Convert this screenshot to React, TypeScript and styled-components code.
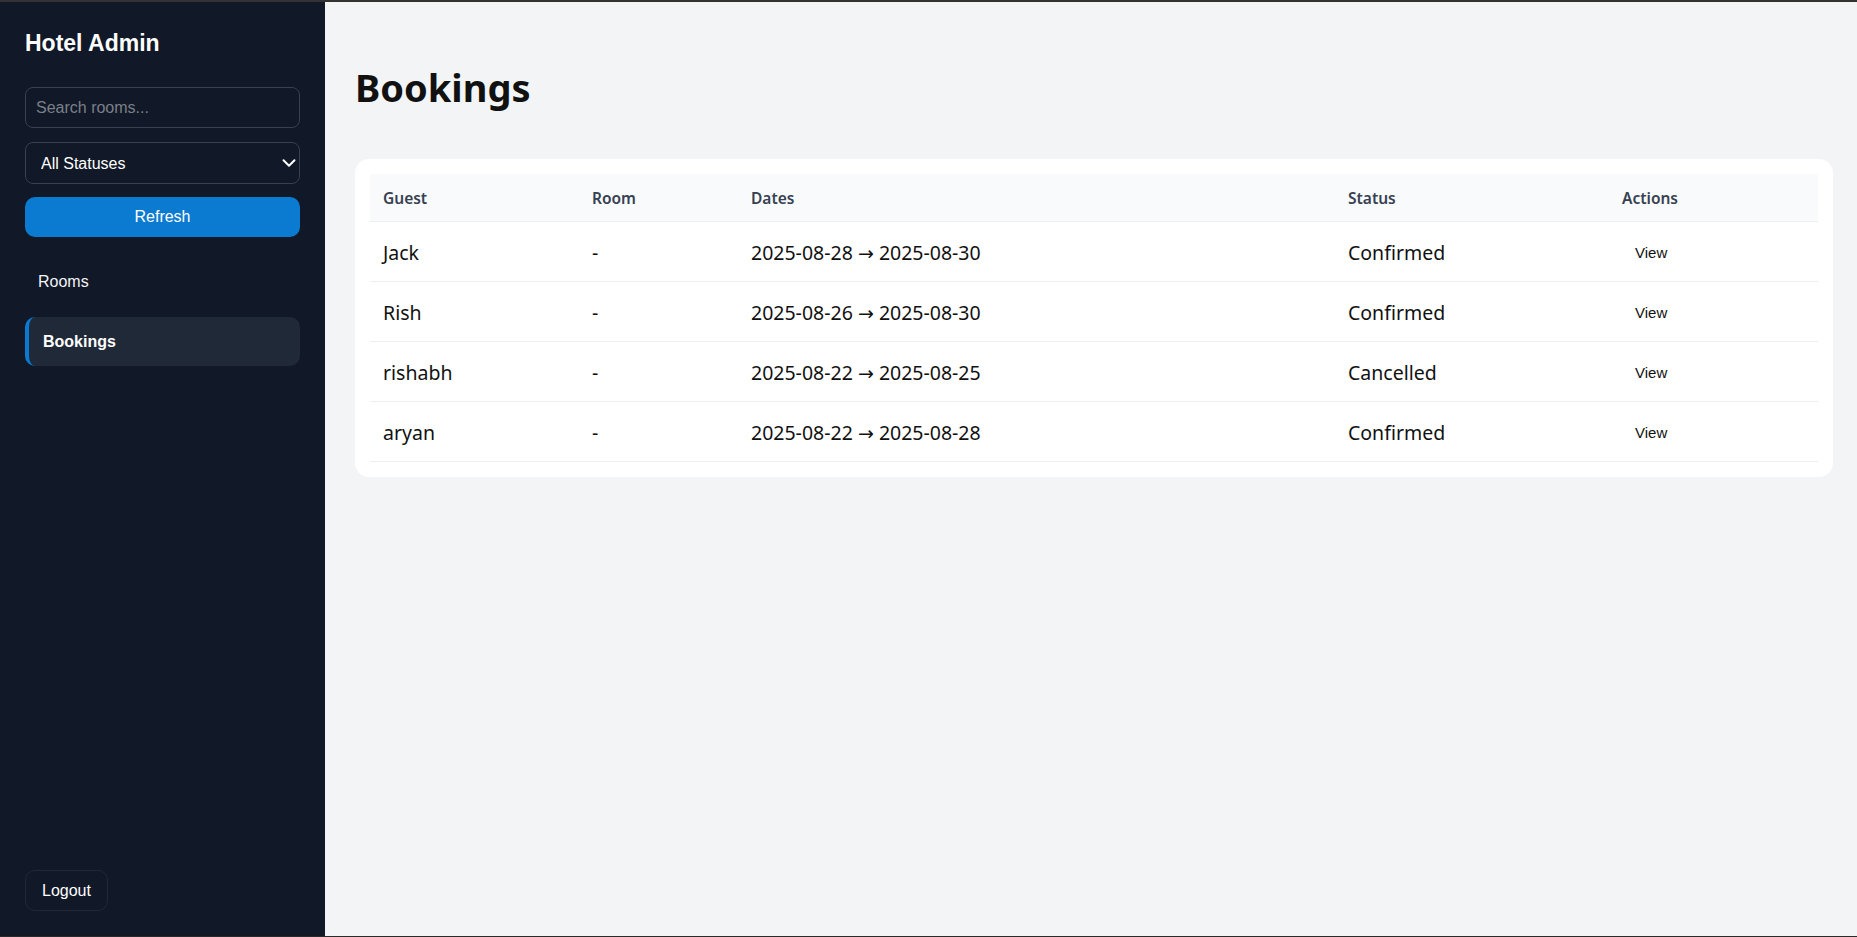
import { useState } from 'react';
import styled, { createGlobalStyle, css } from 'styled-components';
import { ChevronDown } from 'lucide-react';

const GlobalStyle = createGlobalStyle`
  html, body {
    margin: 0;
    padding: 0;
    background: #f3f4f6;
  }
  * { box-sizing: border-box; }
`;

const Layout = styled.div`
  display: flex;
  height: 100vh;
  border-top: 2px solid #333333;
  border-bottom: 1px solid #2a2a2a;
`;

const Sidebar = styled.aside`
  width: 325px;
  flex-shrink: 0;
  background: #111827;
  padding: 29px 25px 25px;
  display: flex;
  flex-direction: column;
  font-family: 'Liberation Sans', Arial, sans-serif;
`;

const Brand = styled.h2`
  margin: 0 0 31px;
  font-size: 23px;
  line-height: 25px;
  font-weight: 700;
  color: #ffffff;
`;

const SearchInput = styled.input`
  height: 41px;
  width: 100%;
  margin-bottom: 14px;
  padding: 0 10px;
  border: 1px solid #374151;
  border-radius: 8px;
  background: transparent;
  color: #ffffff;
  font-family: inherit;
  font-size: 16px;
  outline: none;
  &::placeholder { color: #7b8089; }
`;

const SelectWrap = styled.div`
  position: relative;
  margin-bottom: 13px;
`;

const Select = styled.select`
  appearance: none;
  width: 100%;
  height: 42px;
  padding: 0 30px 0 15px;
  border: 1px solid #374151;
  border-radius: 8px;
  background: #111827;
  color: #ffffff;
  font-family: inherit;
  font-size: 16px;
  outline: none;
`;

const Chevron = styled.span`
  position: absolute;
  right: 0;
  top: 50%;
  transform: translateY(-50%);
  display: flex;
  color: #ffffff;
  pointer-events: none;
`;

const RefreshButton = styled.button`
  height: 40px;
  width: 100%;
  border: none;
  border-radius: 10px;
  background: #0b7ad1;
  color: #ffffff;
  font-family: inherit;
  font-size: 16px;
  cursor: pointer;
`;

const Nav = styled.nav`
  margin-top: 20px;
  display: flex;
  flex-direction: column;
  gap: 11px;
`;

const NavItem = styled.a<{ $active?: boolean }>`
  height: 49px;
  display: flex;
  align-items: center;
  padding: 0 13px;
  border-radius: 10px;
  color: #f3f4f6;
  font-size: 16px;
  text-decoration: none;
  cursor: pointer;
  ${(p) =>
    p.$active &&
    css`
      background: #1f2937;
      border-left: 4px solid #0b7ad1;
      padding-left: 14px;
      font-weight: 700;
      color: #ffffff;
    `}
`;

const LogoutButton = styled.button`
  margin-top: auto;
  align-self: flex-start;
  height: 41px;
  padding: 0 16px;
  border: 1px solid #1f2937;
  border-radius: 10px;
  background: transparent;
  color: #ffffff;
  font-family: inherit;
  font-size: 16px;
  cursor: pointer;
`;

const Main = styled.main`
  flex: 1;
  padding: 30px 24px 0 30px;
  overflow: auto;
  font-family: 'Noto Sans', 'Open Sans', sans-serif;
`;

const Title = styled.h1`
  margin: 31px 0 48px;
  font-size: 38px;
  line-height: 48px;
  font-weight: 700;
  color: #111111;
`;

const Card = styled.section`
  background: #ffffff;
  border-radius: 14px;
  padding: 15px;
`;

const Table = styled.table`
  width: 100%;
  border-collapse: separate;
  border-spacing: 0;
  table-layout: fixed;
`;

const HeadCell = styled.th`
  padding: 11px 13px 10px;
  text-align: left;
  font-size: 15.5px;
  line-height: 26px;
  font-weight: 600;
  color: #374151;
  background: #f8fafc;
  border-bottom: 1px solid #eceff2;
`;

const Cell = styled.td`
  height: 60px;
  padding: 2px 13px 0;
  font-size: 19.5px;
  line-height: 27px;
  color: #111111;
  border-bottom: 1px solid #eceff2;
  white-space: nowrap;
  vertical-align: middle;
`;

const Arrow = styled.span`
  font-family: 'DejaVu Sans', sans-serif;
  font-size: 19px;
`;

const ViewButton = styled.button`
  padding: 4px 12px;
  border: 1px solid transparent;
  border-radius: 6px;
  background: transparent;
  color: #111111;
  font-family: 'Liberation Sans', Arial, sans-serif;
  font-size: 15px;
  line-height: 17px;
  vertical-align: 2px;
  cursor: pointer;
`;

const bookings = [
  { id: 1, guest: 'Jack', room: '-', from: '2025-08-28', to: '2025-08-30', status: 'Confirmed' },
  { id: 2, guest: 'Rish', room: '-', from: '2025-08-26', to: '2025-08-30', status: 'Confirmed' },
  { id: 3, guest: 'rishabh', room: '-', from: '2025-08-22', to: '2025-08-25', status: 'Cancelled' },
  { id: 4, guest: 'aryan', room: '-', from: '2025-08-22', to: '2025-08-28', status: 'Confirmed' },
];

export default function App() {
  const [search, setSearch] = useState('');
  const [status, setStatus] = useState('all');

  return (
    <>
      <GlobalStyle />
      <Layout>
        <Sidebar>
          <Brand>Hotel Admin</Brand>
          <SearchInput
            placeholder="Search rooms..."
            value={search}
            onChange={(e) => setSearch(e.target.value)}
          />
          <SelectWrap>
            <Select value={status} onChange={(e) => setStatus(e.target.value)}>
              <option value="all">All Statuses</option>
              <option value="confirmed">Confirmed</option>
              <option value="cancelled">Cancelled</option>
              <option value="pending">Pending</option>
            </Select>
            <Chevron>
              <ChevronDown size={22} strokeWidth={2.2} />
            </Chevron>
          </SelectWrap>
          <RefreshButton>Refresh</RefreshButton>
          <Nav>
            <NavItem>Rooms</NavItem>
            <NavItem $active>Bookings</NavItem>
          </Nav>
          <LogoutButton>Logout</LogoutButton>
        </Sidebar>

        <Main>
          <Title>Bookings</Title>
          <Card>
            <Table>
              <colgroup>
                <col style={{ width: 209 }} />
                <col style={{ width: 159 }} />
                <col style={{ width: 597 }} />
                <col style={{ width: 274 }} />
                <col />
              </colgroup>
              <thead>
                <tr>
                  <HeadCell>Guest</HeadCell>
                  <HeadCell>Room</HeadCell>
                  <HeadCell>Dates</HeadCell>
                  <HeadCell>Status</HeadCell>
                  <HeadCell>Actions</HeadCell>
                </tr>
              </thead>
              <tbody>
                {bookings.map((b) => (
                  <tr key={b.id}>
                    <Cell>{b.guest}</Cell>
                    <Cell>{b.room}</Cell>
                    <Cell>
                      {b.from} <Arrow>→</Arrow> {b.to}
                    </Cell>
                    <Cell>{b.status}</Cell>
                    <Cell>
                      <ViewButton>View</ViewButton>
                    </Cell>
                  </tr>
                ))}
              </tbody>
            </Table>
          </Card>
        </Main>
      </Layout>
    </>
  );
}
